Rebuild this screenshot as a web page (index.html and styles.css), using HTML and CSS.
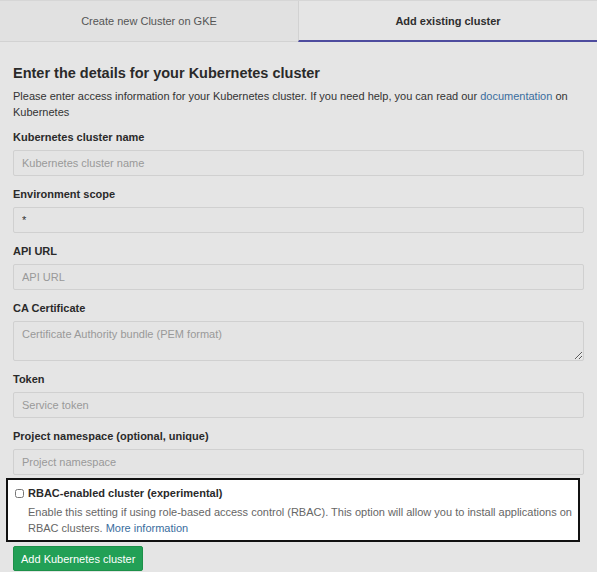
FILE: index.html
```html
<!DOCTYPE html>
<html lang="en">
<head>
    <meta charset="UTF-8">
    <meta name="viewport" content="width=device-width, initial-scale=1.0">
    <title>Add existing cluster</title>
    <link rel="stylesheet" href="styles.css">
</head>
<body>

<!-- Tabs -->
<div class="tabs">
    <div class="tab">Create new Cluster on GKE</div>
    <div class="tab tab-active">Add existing cluster</div>
</div>

<!-- Cluster form -->
<form class="cluster-form">
    <h2>Enter the details for your Kubernetes cluster</h2>
    <p class="intro">Please enter access information for your Kubernetes cluster. If you need help, you can read our <a href="#">documentation</a> on Kubernetes</p>

    <div class="field">
        <label for="cluster-name">Kubernetes cluster name</label>
        <input type="text" id="cluster-name" placeholder="Kubernetes cluster name">
    </div>

    <div class="field">
        <label for="env-scope">Environment scope</label>
        <input type="text" id="env-scope" value="*">
    </div>

    <div class="field">
        <label for="api-url">API URL</label>
        <input type="text" id="api-url" placeholder="API URL">
    </div>

    <div class="field">
        <label for="ca-cert">CA Certificate</label>
        <textarea id="ca-cert" placeholder="Certificate Authority bundle (PEM format)"></textarea>
    </div>

    <div class="field">
        <label for="token">Token</label>
        <input type="text" id="token" placeholder="Service token">
    </div>

    <div class="field">
        <label for="namespace">Project namespace (optional, unique)</label>
        <input type="text" id="namespace" placeholder="Project namespace">
    </div>

    <div class="rbac-box">
        <div class="rbac-title">
            <input type="checkbox" id="rbac">
            <label for="rbac">RBAC-enabled cluster (experimental)</label>
        </div>
        <p class="help-text">Enable this setting if using role-based access control (RBAC). This option will allow you to install applications on RBAC clusters. <a href="#">More information</a></p>
    </div>

    <button type="button" class="btn-submit">Add Kubernetes cluster</button>
</form>

</body>
</html>
```

FILE: styles.css
```css
/* General Styling */
body {
    font-family: "Liberation Sans", Arial, sans-serif;
    margin: 0;
    padding: 0;
    background-color: #e5e5e5;
    color: #2e2e2e;
}

a {
    color: #3a6d9e;
    text-decoration: none;
}

/* Tabs */
.tabs {
    display: flex;
    height: 41px;
    border-top: 1px solid #d6d6d6;
}

.tab {
    flex: 1;
    display: flex;
    align-items: center;
    justify-content: center;
    font-size: 11px;
    color: #555;
    background-color: #e1e1e1;
    border-bottom: 1px solid #d2d2d2;
}

.tab-active {
    background-color: #e5e5e5;
    color: #2e2e2e;
    font-weight: bold;
    border-left: 1px solid #d2d2d2;
    border-bottom: 2px solid #4e4c9e;
}

/* Form */
.cluster-form {
    padding: 0 13px 0 13px;
}

.cluster-form h2 {
    font-size: 14.5px;
    margin: 23px 0 7px;
    color: #2a2a2a;
}

.intro {
    font-size: 11px;
    line-height: 16px;
    margin: 0 0 9px;
    color: #333;
}

.field {
    margin-bottom: 10px;
}

.field label {
    display: block;
    font-size: 11px;
    font-weight: bold;
    line-height: 16px;
    margin-bottom: 5px;
    color: #2a2a2a;
}

.field input,
.field textarea {
    display: block;
    box-sizing: border-box;
    width: 100%;
    height: 26px;
    padding: 0 8px;
    font-family: inherit;
    font-size: 11px;
    color: #333;
    background-color: #e4e4e4;
    border: 1px solid #d0d0d0;
    border-radius: 2px;
    margin: 0;
}

.field textarea {
    height: 40px;
    padding-top: 6px;
    resize: vertical;
}

.field input::placeholder,
.field textarea::placeholder {
    color: #999;
}

/* RBAC box */
.rbac-box {
    margin: -7px 4px 0 -7px;
    padding: 7px 6px 4px 7px;
    background-color: #fff;
    border: 2px solid #111;
}

.rbac-title {
    display: flex;
    align-items: center;
    gap: 4px;
}

.rbac-title input {
    margin: 0;
    width: 9px;
    height: 9px;
}

.rbac-title label {
    font-size: 11px;
    font-weight: bold;
    color: #2a2a2a;
}

.help-text {
    font-size: 11px;
    line-height: 16px;
    color: #666;
    margin: 5px 0 0 13px;
}

/* Submit button */
.btn-submit {
    margin-top: 4px;
    padding: 0 7px;
    height: 25px;
    font-family: inherit;
    font-size: 11px;
    color: #fff;
    background-color: #22a056;
    border: 1px solid #1d9049;
    border-radius: 2px;
    cursor: pointer;
}
```
